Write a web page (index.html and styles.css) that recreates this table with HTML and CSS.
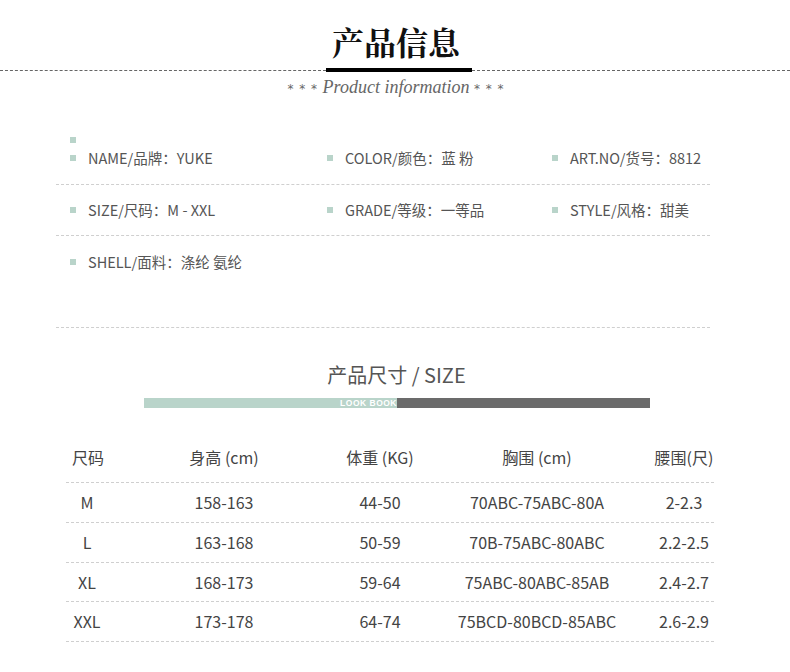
FILE: index.html
```html
<!DOCTYPE html>
<html lang="zh">
<head>
<meta charset="utf-8">
<title>产品信息</title>
<link rel="stylesheet" href="styles.css">
</head>
<body>
<div class="page">
  <header class="head">
    <h1 class="title">产品信息</h1>
    <div class="rule">
      <span class="rule-dash rule-left"></span>
      <span class="rule-bar"></span>
      <span class="rule-dash"></span>
    </div>
    <p class="subtitle"><span class="stars">* * *</span> Product information <span class="stars">* * *</span></p>
  </header>

  <section class="info">
    <div class="lone"><span class="bullet"></span></div>
    <div class="info-row row-first">
      <div class="item"><span class="bullet"></span>NAME/品牌：YUKE</div>
      <div class="item"><span class="bullet"></span>COLOR/颜色：蓝 粉</div>
      <div class="item"><span class="bullet"></span>ART.NO/货号：8812</div>
    </div>
    <div class="info-row row-mid">
      <div class="item"><span class="bullet"></span>SIZE/尺码：M - XXL</div>
      <div class="item"><span class="bullet"></span>GRADE/等级：一等品</div>
      <div class="item"><span class="bullet"></span>STYLE/风格：甜美</div>
    </div>
    <div class="info-row row-last">
      <div class="item"><span class="bullet"></span>SHELL/面料：涤纶 氨纶</div>
    </div>
  </section>

  <section class="size">
    <h2 class="size-title">产品尺寸 / SIZE</h2>
    <div class="lookbook">
      <div class="lb-green"><span class="lb-text">LOOK BOOK</span></div>
      <div class="lb-gray"></div>
    </div>
    <div class="table">
      <div class="tr th">
        <div class="c1 left">尺码</div><div>身高 (cm)</div><div>体重 (KG)</div><div>胸围 (cm)</div><div>腰围(尺)</div>
      </div>
      <div class="tr">
        <div class="c1">M</div><div>158-163</div><div>44-50</div><div>70ABC-75ABC-80A</div><div>2-2.3</div>
      </div>
      <div class="tr">
        <div class="c1">L</div><div>163-168</div><div>50-59</div><div>70B-75ABC-80ABC</div><div>2.2-2.5</div>
      </div>
      <div class="tr short">
        <div class="c1">XL</div><div>168-173</div><div>59-64</div><div>75ABC-80ABC-85AB</div><div>2.4-2.7</div>
      </div>
      <div class="tr">
        <div class="c1">XXL</div><div>173-178</div><div>64-74</div><div>75BCD-80BCD-85ABC</div><div>2.6-2.9</div>
      </div>
    </div>
  </section>
</div>
</body>
</html>
```

FILE: styles.css
```css
* { box-sizing: border-box; }
html, body { margin: 0; padding: 0; background: #fff; }
body {
  font-family: "Noto Sans CJK SC", "Noto Sans", sans-serif;
  color: #555;
}
.page { width: 790px; }

.head { padding-top: 21px; }
.title {
  margin: 0;
  text-align: center;
  font-family: "Noto Serif CJK SC", "Noto Sans CJK SC", serif;
  font-weight: 700;
  font-size: 32px;
  line-height: 40px;
  color: #111;
  padding-left: 2px;
}
.rule {
  display: flex;
  align-items: center;
  height: 4px;
  margin-top: 7px;
}
.rule-dash {
  flex: 1;
  height: 0;
  border-top: 1px dashed #666;
  margin-top: 1px;
}
.rule-left { flex: none; width: 326px; }
.rule-bar {
  width: 146px;
  height: 4px;
  background: #000;
}
.subtitle {
  margin: 5px 0 0;
  text-align: center;
  font-family: "Liberation Serif", serif;
  font-style: italic;
  font-size: 18px;
  line-height: 20px;
  color: #666;
  padding-left: 2px;
}
.stars {
  font-family: "DejaVu Sans", sans-serif;
  font-style: normal;
  font-weight: 400;
  font-size: 12px;
  letter-spacing: 1px;
  vertical-align: 0;
}

.info {
  margin: 38px 80px 0 56px;
}
.lone { padding-left: 14px; height: 6px; }
.lone .bullet { display: block; vertical-align: top; }
.bullet {
  display: inline-block;
  width: 6px;
  height: 6px;
  background: #b9d4ca;
  margin-right: 12px;
  vertical-align: 3px;
}
.info-row {
  display: grid;
  grid-template-columns: 257px 225px 1fr;
  padding-left: 14px;
  border-bottom: 1px dashed #cfcfcf;
  font-size: 14.5px;
  line-height: 20px;
  color: #555;
}
.item { white-space: nowrap; }
.row-first { height: 42px; padding-top: 5px; }
.row-mid { height: 51px; padding-top: 15px; }
.row-last { height: 92px; padding-top: 16px; }

.size { margin-top: 33px; }
.size-title {
  margin: 0;
  text-align: center;
  font-weight: 400;
  font-size: 20px;
  line-height: 28px;
  color: #555;
  padding-left: 3px;
}
.lookbook {
  display: flex;
  width: 506px;
  height: 10px;
  margin: 9px 0 0 144px;
}
.lb-green {
  width: 253px;
  background: #b9d4ca;
  display: flex;
  justify-content: flex-end;
  align-items: center;
}
.lb-text {
  font-family: "Liberation Sans", sans-serif;
  font-weight: 700;
  font-size: 8.5px;
  line-height: 10px;
  letter-spacing: 0.5px;
  color: #fff;
}
.lb-gray { flex: 1; background: #6b6b6b; }

.table {
  width: 648px;
  margin: 28px 0 0 66px;
  font-size: 16px;
  color: #444;
}
.tr {
  display: grid;
  grid-template-columns: 42px 232px 80px 234px 60px;
  align-items: center;
  height: 40px;
  padding-bottom: 1px;
  border-bottom: 1px dashed #cfcfcf;
  text-align: center;
  white-space: nowrap;
}
.tr.short { height: 39px; }
.tr > div { display: flex; justify-content: center; }
.th { height: 47px; padding-bottom: 4px; }
.th .left { justify-content: flex-start; padding-left: 6px; }
```
